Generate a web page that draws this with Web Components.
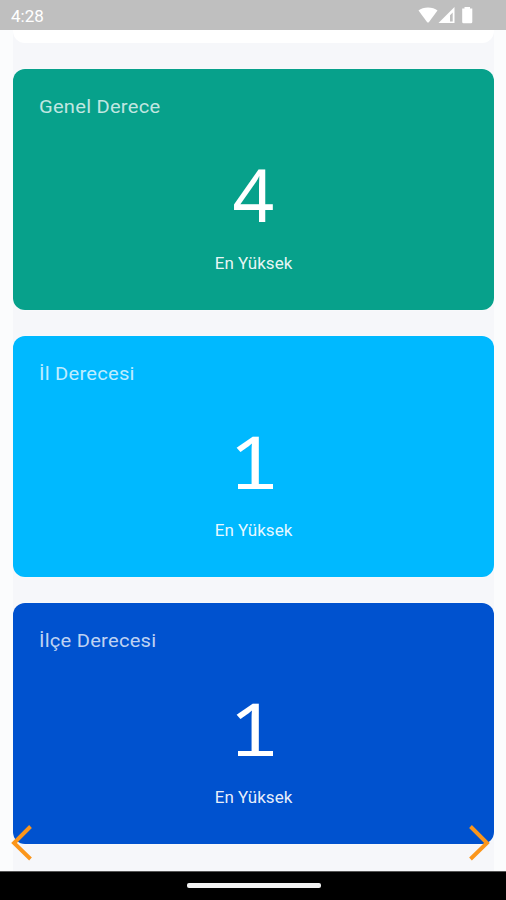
<!DOCTYPE html>
<html lang="tr">
<head>
<meta charset="utf-8">
<title>Derece</title>
<style>
html,body{margin:0;height:100%;overflow:hidden}
body{font-family:Roboto,sans-serif;background:#f6f7fa}
</style>
</head>
<body>
<rank-app></rank-app>
<script>
const define = (name, html) => {
  const t = document.createElement('template');
  t.innerHTML = html;
  customElements.define(name, class extends HTMLElement {
    constructor() {
      super();
      this.attachShadow({mode: 'open'}).append(t.content.cloneNode(true));
    }
  });
};

define('status-bar', `
<style>
:host{display:flex;box-sizing:border-box;height:30px;flex:none;background:#bfbfbf;color:#fff;align-items:center;justify-content:space-between;padding:2px 33px 0 11px;font-size:17px}
.time{line-height:28px}
svg{display:block;margin-top:-2px}
</style>
<span class="time"><slot></slot></span>
<svg width="56" height="18" viewBox="417 6 56 18" fill="#fff">
<path d="M418.500 10.500C423 6.500 433 6.500 437.500 10.500L429 22Q428 23 427 22Z"/>
<path fill-rule="evenodd" d="M454.500 7V23H438.500ZM452.700 12.500L450 15.200V21.500H452.700Z"/>
<path d="M464.500 7H470V8.500H472.300V22Q472.300 23.300 471 23.300H463.500Q462.200 23.300 462.200 22V8.500H464.500Z"/>
</svg>`);

define('rank-card', `
<style>
:host{display:flex;box-sizing:border-box;height:241px;flex:none;flex-direction:column;border-radius:12px;background:var(--card);color:#fff;padding:26px 26px 0;box-shadow:0 0 2px #fff}
.title{font-size:19px;line-height:24px;letter-spacing:.22px;transform:scaleX(1.06);transform-origin:0 0;color:rgba(255,255,255,.75)}
.value{font-family:"Noto Sans",sans-serif;font-size:73px;line-height:80px;height:80px;text-align:center;margin-top:35px}
.digit{display:inline-block;position:relative}
.glyph{display:inline-block}
:host([foot]) .glyph{transform:scaleX(1.14);transform-origin:27px 0}
:host([foot]) .digit::after{content:"";position:absolute;left:5px;width:35px;top:63px;height:5px;background:#fff}
.caption{font-size:17px;line-height:22px;text-align:center;margin-top:18px;color:rgba(255,255,255,.92)}
</style>
<div class="title"><slot name="title"></slot></div>
<div class="value"><span class="digit"><span class="glyph"><slot></slot></span></span></div>
<div class="caption"><slot name="caption"></slot></div>`);

define('page-arrow', `
<style>:host{display:block;width:22px;height:36px}:host([next]){transform:scaleX(-1)}svg{display:block}</style>
<svg width="22" height="36" viewBox="0 0 22 36"><path d="M19.500 1.500L3 18L19.500 34" fill="none" stroke="#fb961b" stroke-width="3.900"/></svg>`);

define('nav-bar', `
<style>:host{display:flex;box-sizing:border-box;height:29px;flex:none;background:#000;border-top:1px solid #555;justify-content:center;align-items:center;padding:0 0 1px 1px}
i{width:134px;height:5px;border-radius:2px;background:#f2f2f2}</style><i></i>`);

define('rank-app', `
<style>
:host{display:flex;flex-direction:column;width:506px;height:900px;position:relative;overflow:hidden;background:#fbfcfd}
main{flex:1;min-height:0;overflow:hidden;margin:0 12px 0 13px;background:#f6f7fa;display:flex;flex-direction:column;gap:26px}
.prev{height:13px;flex:none;background:#fff;border-radius:0 0 12px 12px}
page-arrow{position:absolute;top:825px}
.l{left:11px}.r{right:16px}
</style>
<status-bar>4:28</status-bar>
<main>
<div class="prev"></div>
<rank-card style="--card:#07a18b"><span slot="title">Genel Derece</span>4<span slot="caption">En Yüksek</span></rank-card>
<rank-card foot style="--card:#00b9ff"><span slot="title">İl Derecesi</span>1<span slot="caption">En Yüksek</span></rank-card>
<rank-card foot style="--card:#0052cf"><span slot="title">İlçe Derecesi</span>1<span slot="caption">En Yüksek</span></rank-card>
</main>
<nav-bar></nav-bar>
<page-arrow class="l"></page-arrow>
<page-arrow class="r" next></page-arrow>`);
</script>
</body>
</html>
